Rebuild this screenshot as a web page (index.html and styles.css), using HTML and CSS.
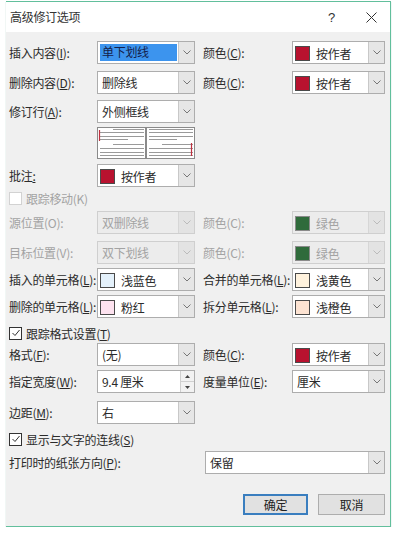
FILE: index.html
```html
<!DOCTYPE html>
<html>
<head>
<meta charset="utf-8">
<link rel="stylesheet" href="styles.css">
</head>
<body>
<div class="dialog">
  <div class="titlebar">
    <span class="title">高级修订选项</span>
    <span class="help">?</span>
    <svg class="close" width="11" height="11" viewBox="0 0 11 11"><path d="M0.5 0.5 L10.5 10.5 M10.5 0.5 L0.5 10.5" stroke="#333" stroke-width="1" fill="none"/></svg>
  </div>
  <div class="body">
    <div class="row r1">
      <span class="lbl">插入内容(<u>I</u>):</span>
      <div class="combo"><span class="val sel">单下划线</span><span class="arr"><svg width="8" height="5" viewBox="0 0 8 5"><path d="M0.5 0.5 L4 4 L7.5 0.5" stroke="#777" fill="none"/></svg></span></div>
      <span class="lbl2">颜色(<u>C</u>):</span>
      <div class="combo c2"><span class="sw red"></span><span class="val">按作者</span><span class="arr"><svg width="8" height="5" viewBox="0 0 8 5"><path d="M0.5 0.5 L4 4 L7.5 0.5" stroke="#777" fill="none"/></svg></span></div>
    </div>
    <div class="row r2">
      <span class="lbl">删除内容(<u>D</u>):</span>
      <div class="combo"><span class="val">删除线</span><span class="arr"><svg width="8" height="5" viewBox="0 0 8 5"><path d="M0.5 0.5 L4 4 L7.5 0.5" stroke="#777" fill="none"/></svg></span></div>
      <span class="lbl2">颜色(<u>C</u>):</span>
      <div class="combo c2"><span class="sw red"></span><span class="val">按作者</span><span class="arr"><svg width="8" height="5" viewBox="0 0 8 5"><path d="M0.5 0.5 L4 4 L7.5 0.5" stroke="#777" fill="none"/></svg></span></div>
    </div>
    <div class="row r3">
      <span class="lbl">修订行(<u>A</u>):</span>
      <div class="combo"><span class="val">外侧框线</span><span class="arr"><svg width="8" height="5" viewBox="0 0 8 5"><path d="M0.5 0.5 L4 4 L7.5 0.5" stroke="#777" fill="none"/></svg></span></div>
    </div>
    <div class="preview">
      <svg width="98" height="32" viewBox="0 0 98 32">
        <rect x="0.5" y="0.5" width="48" height="31" fill="#fff" stroke="#8a8a8a"/>
        <rect x="49.5" y="0.5" width="48" height="31" fill="#fff" stroke="#8a8a8a"/>
        <g stroke="#9a9a9a" stroke-width="1">
          <path d="M16 2.5 H47 M3 5.5 H47 M3 9.5 H47 M3 12.5 H31 M16 17.5 H47 M3 21.5 H47 M3 25.5 H47 M3 28.5 H47"/>
          <path d="M52 2.5 H96 M52 5.5 H96 M52 9.5 H96 M52 12.5 H80 M65 17.5 H96 M52 21.5 H96 M52 25.5 H96 M52 28.5 H96"/>
        </g>
        <path d="M2.5 3 V14" stroke="#c0303f" stroke-width="1.2"/>
        <path d="M94.5 16 V29" stroke="#c0303f" stroke-width="1.2"/>
      </svg>
    </div>
    <div class="row r4">
      <span class="lbl">批注<u>:</u></span>
      <div class="combo"><span class="sw red"></span><span class="val">按作者</span><span class="arr"><svg width="8" height="5" viewBox="0 0 8 5"><path d="M0.5 0.5 L4 4 L7.5 0.5" stroke="#777" fill="none"/></svg></span></div>
    </div>
    <div class="chkrow r5 dis">
      <span class="chk"></span><span>跟踪移动(K)</span>
    </div>
    <div class="row r6 dis">
      <span class="lbl">源位置(O):</span>
      <div class="combo off"><span class="val">双删除线</span><span class="arr"><svg width="8" height="5" viewBox="0 0 8 5"><path d="M0.5 0.5 L4 4 L7.5 0.5" stroke="#bbb" fill="none"/></svg></span></div>
      <span class="lbl2">颜色(C):</span>
      <div class="combo c2 off"><span class="sw green"></span><span class="val">绿色</span><span class="arr"><svg width="8" height="5" viewBox="0 0 8 5"><path d="M0.5 0.5 L4 4 L7.5 0.5" stroke="#bbb" fill="none"/></svg></span></div>
    </div>
    <div class="row r7 dis">
      <span class="lbl">目标位置(V):</span>
      <div class="combo off"><span class="val">双下划线</span><span class="arr"><svg width="8" height="5" viewBox="0 0 8 5"><path d="M0.5 0.5 L4 4 L7.5 0.5" stroke="#bbb" fill="none"/></svg></span></div>
      <span class="lbl2">颜色(C):</span>
      <div class="combo c2 off"><span class="sw green"></span><span class="val">绿色</span><span class="arr"><svg width="8" height="5" viewBox="0 0 8 5"><path d="M0.5 0.5 L4 4 L7.5 0.5" stroke="#bbb" fill="none"/></svg></span></div>
    </div>
    <div class="row r8">
      <span class="lbl">插入的单元格(<u>L</u>):</span>
      <div class="combo"><span class="sw lblue"></span><span class="val">浅蓝色</span><span class="arr"><svg width="8" height="5" viewBox="0 0 8 5"><path d="M0.5 0.5 L4 4 L7.5 0.5" stroke="#777" fill="none"/></svg></span></div>
      <span class="lbl2">合并的单元格(<u>L</u>):</span>
      <div class="combo c2"><span class="sw lyellow"></span><span class="val">浅黄色</span><span class="arr"><svg width="8" height="5" viewBox="0 0 8 5"><path d="M0.5 0.5 L4 4 L7.5 0.5" stroke="#777" fill="none"/></svg></span></div>
    </div>
    <div class="row r9">
      <span class="lbl">删除的单元格(<u>L</u>):</span>
      <div class="combo"><span class="sw pink"></span><span class="val">粉红</span><span class="arr"><svg width="8" height="5" viewBox="0 0 8 5"><path d="M0.5 0.5 L4 4 L7.5 0.5" stroke="#777" fill="none"/></svg></span></div>
      <span class="lbl2">拆分单元格(<u>L</u>):</span>
      <div class="combo c2"><span class="sw lorange"></span><span class="val">浅橙色</span><span class="arr"><svg width="8" height="5" viewBox="0 0 8 5"><path d="M0.5 0.5 L4 4 L7.5 0.5" stroke="#777" fill="none"/></svg></span></div>
    </div>
    <div class="chkrow r10">
      <span class="chk on"><svg width="10" height="10" viewBox="0 0 10 10"><path d="M1.5 5 L4 7.5 L8.5 2" stroke="#333" stroke-width="1" fill="none"/></svg></span><span>跟踪格式设置(<u>T</u>)</span>
    </div>
    <div class="row r11">
      <span class="lbl">格式(<u>F</u>):</span>
      <div class="combo"><span class="val">(无)</span><span class="arr"><svg width="8" height="5" viewBox="0 0 8 5"><path d="M0.5 0.5 L4 4 L7.5 0.5" stroke="#777" fill="none"/></svg></span></div>
      <span class="lbl2">颜色(<u>C</u>):</span>
      <div class="combo c2"><span class="sw red"></span><span class="val">按作者</span><span class="arr"><svg width="8" height="5" viewBox="0 0 8 5"><path d="M0.5 0.5 L4 4 L7.5 0.5" stroke="#777" fill="none"/></svg></span></div>
    </div>
    <div class="row r12">
      <span class="lbl">指定宽度(<u>W</u>):</span>
      <div class="combo spin"><span class="val">9.4 厘米</span><span class="spinbtns"><span class="sb"><svg width="5" height="3" viewBox="0 0 5 3"><path d="M0 3 L2.5 0 L5 3Z" fill="#444"/></svg></span><span class="sb"><svg width="5" height="3" viewBox="0 0 5 3"><path d="M0 0 L2.5 3 L5 0Z" fill="#444"/></svg></span></span></div>
      <span class="lbl2">度量单位(<u>E</u>):</span>
      <div class="combo c2"><span class="val">厘米</span><span class="arr"><svg width="8" height="5" viewBox="0 0 8 5"><path d="M0.5 0.5 L4 4 L7.5 0.5" stroke="#777" fill="none"/></svg></span></div>
    </div>
    <div class="row r13">
      <span class="lbl">边距(<u>M</u>):</span>
      <div class="combo"><span class="val">右</span><span class="arr"><svg width="8" height="5" viewBox="0 0 8 5"><path d="M0.5 0.5 L4 4 L7.5 0.5" stroke="#777" fill="none"/></svg></span></div>
    </div>
    <div class="chkrow r14">
      <span class="chk on"><svg width="10" height="10" viewBox="0 0 10 10"><path d="M1.5 5 L4 7.5 L8.5 2" stroke="#333" stroke-width="1" fill="none"/></svg></span><span>显示与文字的连线(<u>S</u>)</span>
    </div>
    <div class="row r15">
      <span class="lblwide">打印时的纸张方向(<u>P</u>):</span>
      <div class="combo wide"><span class="val">保留</span><span class="arr"><svg width="8" height="5" viewBox="0 0 8 5"><path d="M0.5 0.5 L4 4 L7.5 0.5" stroke="#777" fill="none"/></svg></span></div>
    </div>
    <div class="btnrow">
      <span class="btn def">确定</span>
      <span class="btn">取消</span>
    </div>
  </div>
</div>
</body>
</html>
```
FILE: styles.css
```css
html, body {
  margin: 0;
  padding: 0;
  background: #fff;
}
body {
  font-family: "Noto Sans CJK SC", "Microsoft YaHei", sans-serif;
  font-size: 12px;
  letter-spacing: -0.3px;
  color: #2b2b2b;
}
u { text-underline-offset: 1px; }
.dialog {
  margin: 1px 0 0 6px;
  width: 384px;
  border-top: 1px solid #62bf9c;
  border-right: 1px solid #62bf9c;
  border-bottom: 1px solid #62bf9c;
  box-shadow: 0 1px 1px rgba(120, 180, 160, 0.6);
}
.titlebar {
  height: 30px;
  background: #fff;
  display: flex;
  align-items: center;
  padding-left: 4px;
}
.title {
  flex: 1;
  color: #333;
  line-height: 16px;
}
.help {
  font-family: "Liberation Sans", sans-serif;
  font-size: 13px;
  color: #333;
  margin-right: 31px;
}
.close {
  margin-right: 13px;
}
.body {
  background: #f0f0f0;
  padding: 9px 5px 11px 3px;
}
.row {
  display: flex;
  align-items: center;
  height: 23px;
}
.lbl {
  width: 88px;
  white-space: nowrap;
  line-height: 16px;
}
.lbl2 {
  width: 89px;
  margin-left: 8px;
  white-space: nowrap;
}
.lblwide {
  width: 196px;
  white-space: nowrap;
}
.combo {
  box-sizing: border-box;
  width: 98px;
  height: 23px;
  border: 1px solid #adadad;
  background: #fff;
  display: flex;
  align-items: center;
  position: relative;
}
.combo.c2 { width: 93px; }
.combo.wide { width: 180px; }
.combo .val {
  flex: 1;
  padding-left: 4px;
  white-space: nowrap;
  line-height: 16px;
}
.combo .val.sel {
  background: #3c94ee;
  color: #14204a;
  margin-left: 2px;
  padding-left: 2px;
  height: 17px;
  margin-right: 1px;
}
.combo .sw {
  width: 13px;
  height: 13px;
  border: 1px solid #4a4a4a;
  margin-left: 2px;
  flex: none;
  margin-top: 1px;
}
.combo .sw + .val {
  padding-left: 6px;
  padding-top: 3px;
}
.sw.red { background: #b8122f; }
.sw.green { background: #2f6b3b; border-color: #555; }
.sw.lblue { background: #e4f1fb; }
.sw.lyellow { background: #fff2dd; }
.sw.pink { background: #fde2ef; }
.sw.lorange { background: #fde3d2; }
.combo .arr {
  width: 15px;
  height: 21px;
  border-left: 1px solid #c8c8c8;
  background: #e6e6e6;
  display: flex;
  align-items: center;
  justify-content: center;
  flex: none;
}
.combo.off {
  background: #ececec;
  border-color: #cfcfcf;
}
.combo.off .arr {
  background: #e3e3e3;
  border-left-color: #d6d6d6;
}
.dis { color: #a3a3a3; }
.combo.off .sw { border-color: #8a8a8a; }
.spinbtns {
  width: 13px;
  height: 21px;
  display: flex;
  flex-direction: column;
  border-left: 1px solid #d0d0d0;
  flex: none;
}
.sb {
  flex: 1;
  display: flex;
  align-items: center;
  justify-content: center;
  background: #f2f2f2;
}
.sb + .sb { border-top: 1px solid #d0d0d0; }
.r1 { margin-top: 0; }
.r2 { margin-top: 7px; }
.r3 { margin-top: 6px; }
.preview {
  margin: 4px 0 0 88px;
  height: 32px;
}
.preview svg { display: block; }
.r4 { margin-top: 5px; }
.chkrow {
  display: flex;
  align-items: center;
  height: 16px;
  white-space: nowrap;
}
.chk {
  box-sizing: border-box;
  width: 13px;
  height: 13px;
  border: 1px solid #d2d2d2;
  background: #fff;
  margin-right: 4px;
  display: flex;
  align-items: center;
  justify-content: center;
}
.chk.on { border-color: #333; }
.r5 { margin-top: 3px; }
.r6 { margin-top: 5px; }
.r7 { margin-top: 7px; }
.r8 { margin-top: 4px; }
.r9 { margin-top: 4px; }
.r10 { margin-top: 7px; }
.r11 { margin-top: 2px; }
.r12 { margin-top: 4px; }
.r13 { margin-top: 8px; }
.r14 { margin-top: 7px; }
.r15 { margin-top: 4px; }
.btnrow {
  display: flex;
  justify-content: flex-end;
  margin-top: 20px;
  gap: 10px;
}
.btn {
  box-sizing: border-box;
  width: 67px;
  height: 21px;
  border: 1px solid #adadad;
  background: #e1e1e1;
  display: flex;
  align-items: center;
  justify-content: center;
  color: #222;
}
.btn.def {
  width: 65px;
  border: 2px solid #3a7ebf;
}
```
